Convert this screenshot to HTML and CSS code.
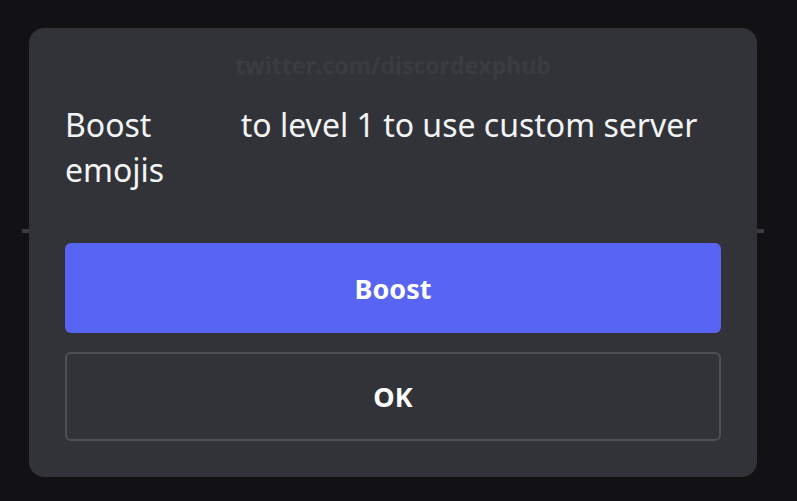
FILE: index.html
```html
<!DOCTYPE html>
<html>
<head>
<meta charset="utf-8">
<link rel="stylesheet" href="styles.css">
</head>
<body>
<div class="dialog">
  <div class="watermark">twitter.com/discordexphub</div>
  <p class="message"><span class="lead">Boost</span> to level 1 to use custom server emojis</p>
  <div class="actions">
    <button class="btn btn-primary">Boost</button>
    <button class="btn btn-outline">OK</button>
  </div>
</div>
</body>
</html>
```
FILE: styles.css
```css
html, body {
  margin: 0;
  padding: 0;
}
body {
  width: 797px;
  height: 501px;
  overflow: hidden;
  background-color: #121215;
  background-image: linear-gradient(to bottom, transparent 229px, #3a3c41 229px, #3a3c41 233px, transparent 233px);
  background-size: 742px 100%;
  background-position: 22px 0;
  background-repeat: no-repeat;
  padding: 28px 0 0 29px;
  box-sizing: border-box;
  font-family: "Noto Sans", "Open Sans", sans-serif;
}
.dialog {
  width: 728px;
  height: 449px;
  box-sizing: border-box;
  background: #313338;
  border-radius: 15px;
  padding: 22px 36px 0 36px;
  display: flex;
  flex-direction: column;
}
.watermark {
  text-align: center;
  font-family: "Open Sans", sans-serif;
  font-weight: 700;
  font-size: 23px;
  line-height: 30px;
  color: #3a3c42;
}
.message {
  margin: 22px 0 0 0;
  font-size: 32px;
  line-height: 45px;
  color: #f2f3f5;
  font-weight: 400;
}
.lead {
  margin-right: 81px;
}
.actions {
  margin-top: 51px;
  display: flex;
  flex-direction: column;
  gap: 19px;
}
.btn {
  width: 656px;
  border-radius: 6px;
  font-family: "Noto Sans", sans-serif;
  font-weight: 700;
  font-size: 27px;
  color: #ffffff;
  display: flex;
  align-items: center;
  justify-content: center;
  padding: 0;
  margin: 0;
  box-sizing: border-box;
}
.btn-primary {
  height: 90px;
  background: #5865f2;
  border: none;
}
.btn-outline {
  height: 89px;
  background: transparent;
  border: 2px solid #4e5058;
}
```
